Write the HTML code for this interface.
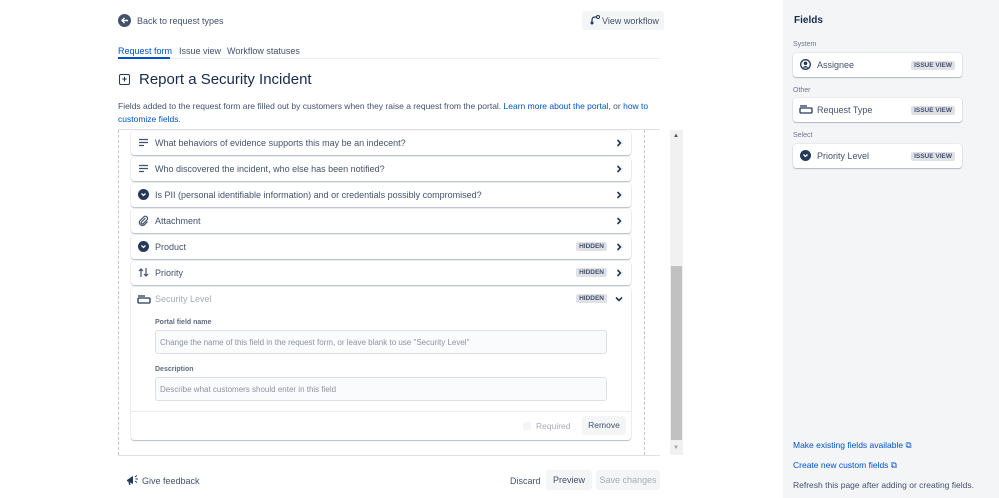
<!DOCTYPE html><html><head><style>
*{box-sizing:border-box;margin:0;padding:0}
body{width:999px;height:498px;position:relative;background:#fff;font-family:"Liberation Sans",sans-serif;color:#172b4d;overflow:hidden;font-size:9px}
.a{position:absolute}
.row{position:absolute;left:131px;width:500px;height:24px;background:#fff;border-radius:3px;box-shadow:0 1px 1px rgba(9,30,66,.25),0 0 1px rgba(9,30,66,.31)}
.row .t{position:absolute;left:24px;top:7px;font-size:9px;color:#42526e}
.row .ic{position:absolute;left:7px;top:6px;width:11px;height:11px}
.chev{position:absolute;right:8px;top:8px;width:8px;height:8px}
.hid{position:absolute;right:24px;top:7px;background:#dfe1e6;color:#42526e;font-size:6.5px;font-weight:bold;padding:1px 3px;border-radius:2px}
.lozi{position:absolute;right:7px;top:8px;background:#dfe1e6;color:#42526e;font-size:6.5px;font-weight:bold;padding:1px 3px;border-radius:2px}
.card{position:absolute;left:793px;width:169px;height:24px;background:#fff;border-radius:3px;box-shadow:0 1px 1px rgba(9,30,66,.25),0 0 1px rgba(9,30,66,.31)}
.card .t{position:absolute;left:24px;top:7px;font-size:9px;color:#42526e}
.cap{position:absolute;left:793px;font-size:7px;color:#6b778c}
.dot{width:11px;height:11px;border-radius:50%;background:#253858}
</style></head><body>
<svg width="0" height="0" style="position:absolute"><defs>
<symbol id="cr" viewBox="0 0 8 8"><path d="M2.5 1 L5.5 4 L2.5 7" fill="none" stroke="#253858" stroke-width="1.6"/></symbol>
<symbol id="cd" viewBox="0 0 8 8"><path d="M1 2.5 L4 5.5 L7 2.5" fill="none" stroke="#253858" stroke-width="1.6"/></symbol>
<symbol id="sel" viewBox="0 0 11 11"><circle cx="5.5" cy="5.5" r="5.5" fill="#253858"/><path d="M3.5 4.5 L5.5 6.5 L7.5 4.5" fill="none" stroke="#fff" stroke-width="1.3"/></symbol>
<symbol id="ln" viewBox="0 0 11 11"><path d="M1 2.5H10M1 5.5H10M1 8.5H6" stroke="#42526e" stroke-width="1.3"/></symbol>
<symbol id="box" viewBox="0 0 14 9"><path d="M1 1H8" stroke="#253858" stroke-width="1.3"/><rect x="1" y="3" width="12" height="5" rx="1" fill="none" stroke="#253858" stroke-width="1.3"/></symbol>
</defs></svg>
<div class="a" style="left:783px;top:0;width:216px;height:498px;background:#f4f5f7"></div>
<div class="a" style="left:794px;top:15px;font-size:10px;font-weight:bold">Fields</div>
<div class="cap" style="top:41px">System</div>
<div class="card" style="top:53px"><svg class="a" style="left:7px;top:6px" width="11" height="11" viewBox="0 0 11 11"><circle cx="5.5" cy="5.5" r="4.8" fill="none" stroke="#253858" stroke-width="1.3"/><circle cx="5.5" cy="4.3" r="1.8" fill="#253858"/><path d="M2.5 8.6 Q5.5 5.5 8.5 8.6" fill="#253858"/></svg><span class="t">Assignee</span><span class="lozi">ISSUE VIEW</span></div>
<div class="cap" style="top:87px">Other</div>
<div class="card" style="top:98px"><svg class="a" style="left:6px;top:7px" width="14" height="9"><use href="#box"/></svg><span class="t">Request Type</span><span class="lozi">ISSUE VIEW</span></div>
<div class="cap" style="top:132px">Select</div>
<div class="card" style="top:144px"><svg class="a" style="left:7px;top:6px" width="11" height="11"><use href="#sel"/></svg><span class="t">Priority Level</span><span class="lozi">ISSUE VIEW</span></div>
<div class="a" style="left:793px;top:440px;font-size:8.5px;color:#0052cc">Make existing fields available ⧉</div>
<div class="a" style="left:793px;top:460px;font-size:8.5px;color:#0052cc">Create new custom fields ⧉</div>
<div class="a" style="left:793px;top:480px;font-size:8.5px;color:#42526e">Refresh this page after adding or creating fields.</div>

<svg class="a" style="left:118px;top:14px" width="13" height="13" viewBox="0 0 13 13"><circle cx="6.5" cy="6.5" r="6.5" fill="#42526e"/><path d="M10 6.5H4M6.5 4L4 6.5L6.5 9" fill="none" stroke="#fff" stroke-width="1.4"/></svg>
<div class="a" style="left:137px;top:16px;font-size:9px;color:#42526e">Back to request types</div>
<div class="a" style="left:582px;top:11px;width:82px;height:19px;background:#f4f5f7;border-radius:3px;font-size:9px;color:#42526e;padding:5px 0 0 20px">View workflow</div>
<svg class="a" style="left:590px;top:15px" width="10" height="10" viewBox="0 0 10 10"><circle cx="2" cy="8" r="1.5" fill="#253858"/><circle cx="8" cy="2" r="1.5" fill="none" stroke="#253858"/><path d="M2 8 V5 Q2 2 5 2 H7" fill="none" stroke="#253858" stroke-width="1.2"/></svg>
<div class="a" style="left:118px;top:46px;font-size:9px;color:#0052cc">Request form</div>
<div class="a" style="left:179px;top:46px;font-size:9px;color:#42526e">Issue view</div>
<div class="a" style="left:227px;top:46px;font-size:9px;color:#42526e">Workflow statuses</div>
<div class="a" style="left:118px;top:58px;width:542px;height:1px;background:#ebecf0"></div>
<div class="a" style="left:118px;top:57px;width:52px;height:2px;background:#0052cc"></div>
<div class="a" style="left:119px;top:74px;width:11px;height:11px;border:1.5px solid #253858;border-radius:2px;font-size:9px;line-height:8px;text-align:center;font-weight:bold">+</div>
<div class="a" style="left:139px;top:71px;font-size:15px;color:#172b4d">Report a Security Incident</div>
<div class="a" style="left:118px;top:100px;width:545px;font-size:8.5px;line-height:12.5px;color:#42526e">Fields added to the request form are filled out by customers when they raise a request from the portal. <span style="color:#0052cc">Learn more about the portal</span>, or <span style="color:#0052cc">how to customize fields</span>.</div>
<div class="a" style="left:118px;top:129px;width:542px;height:1px;background:#dfe1e6"></div>
<div class="a" style="left:118px;top:130px;width:527px;height:325px;border-left:1px dashed #c1c7d0;border-right:1px dashed #c1c7d0"></div>
<div class="a" style="left:118px;top:455px;width:542px;height:1px;background:#dfe1e6"></div>
<div class="a" style="left:670px;top:130px;width:13px;height:325px;background:#f1f1f1"></div>
<div class="a" style="left:671px;top:266px;width:11px;height:174px;background:#c1c1c1"></div>
<div class="a" style="left:673px;top:133px;font-size:6px;color:#505050">▲</div>
<div class="a" style="left:673px;top:445px;font-size:6px;color:#a0a0a0">▼</div>

<div class="row" style="top:131px"><svg class="ic"><use href="#ln"/></svg><span class="t">What behaviors of evidence supports this may be an indecent?</span><svg class="chev"><use href="#cr"/></svg></div>
<div class="row" style="top:157px"><svg class="ic"><use href="#ln"/></svg><span class="t">Who discovered the incident, who else has been notified?</span><svg class="chev"><use href="#cr"/></svg></div>
<div class="row" style="top:183px"><svg class="ic"><use href="#sel"/></svg><span class="t">Is PII (personal identifiable information) and or credentials possibly compromised?</span><svg class="chev"><use href="#cr"/></svg></div>
<div class="row" style="top:209px"><svg class="ic" viewBox="0 0 11 11"><path d="M7.5 3 L3.5 7 a1.2 1.2 0 0 0 1.7 1.7 L9 4.9 a2.2 2.2 0 0 0 -3.1 -3.1 L2 5.7 a3 3 0 0 0 4.2 4.2 L9.5 6.6" fill="none" stroke="#42526e" stroke-width="1.2"/></svg><span class="t">Attachment</span><svg class="chev"><use href="#cr"/></svg></div>
<div class="row" style="top:235px"><svg class="ic"><use href="#sel"/></svg><span class="t">Product</span><span class="hid">HIDDEN</span><svg class="chev"><use href="#cr"/></svg></div>
<div class="row" style="top:261px"><svg class="ic" viewBox="0 0 11 11"><path d="M3 10V2M1 4L3 2L5 4M8 1V9M6 7L8 9L10 7" fill="none" stroke="#42526e" stroke-width="1.2"/></svg><span class="t">Priority</span><span class="hid">HIDDEN</span><svg class="chev"><use href="#cr"/></svg></div>
<div class="row" style="top:287px;height:153px">
<svg class="a" style="left:6px;top:8px" width="14" height="9"><use href="#box"/></svg>
<span class="t" style="color:#a5adba">Security Level</span><span class="hid">HIDDEN</span><svg class="chev"><use href="#cd"/></svg>
<div class="a" style="left:24px;top:32px;font-size:7px;font-weight:bold;color:#5e6c84">Portal field name</div>
<div class="a" style="left:24px;top:43px;width:452px;height:24px;background:#fafbfc;border:1px solid #dfe1e6;border-radius:3px;font-size:8px;color:#8993a4;padding:7px 4px">Change the name of this field in the request form, or leave blank to use "Security Level"</div>
<div class="a" style="left:24px;top:79px;font-size:7px;font-weight:bold;color:#5e6c84">Description</div>
<div class="a" style="left:24px;top:90px;width:452px;height:24px;background:#fafbfc;border:1px solid #dfe1e6;border-radius:3px;font-size:8px;color:#8993a4;padding:7px 4px">Describe what customers should enter in this field</div>
<div class="a" style="left:0;top:124px;width:500px;height:1px;background:#ebecf0"></div>
<div class="a" style="left:392px;top:135px;width:8px;height:8px;background:#f4f5f7;border-radius:2px"></div>
<div class="a" style="left:405px;top:134px;font-size:8.5px;color:#a5adba">Required</div>
<div class="a" style="left:451px;top:129px;width:44px;height:19px;background:#f4f5f7;border-radius:3px;font-size:8.5px;color:#42526e;text-align:center;line-height:19px">Remove</div>
</div>

<svg class="a" style="left:126px;top:474px" width="13" height="12" viewBox="0 0 13 12"><path d="M1 6 L7 2 V10 L1 7Z" fill="#253858"/><path d="M3 8 L4 11" stroke="#253858" stroke-width="1.3"/><path d="M9 3L11 1.5M9.5 5H12M9 7L11 8.5" stroke="#253858" stroke-width="1"/></svg>
<div class="a" style="left:142px;top:476px;font-size:9px;color:#42526e">Give feedback</div>
<div class="a" style="left:510px;top:476px;font-size:9px;color:#42526e">Discard</div>
<div class="a" style="left:546px;top:470px;width:46px;height:20px;background:#f4f5f7;border-radius:3px;font-size:9px;color:#42526e;text-align:center;line-height:20px">Preview</div>
<div class="a" style="left:596px;top:470px;width:64px;height:20px;background:#f4f5f7;border-radius:3px;font-size:9px;color:#a5adba;text-align:center;line-height:20px">Save changes</div>
</body></html>
